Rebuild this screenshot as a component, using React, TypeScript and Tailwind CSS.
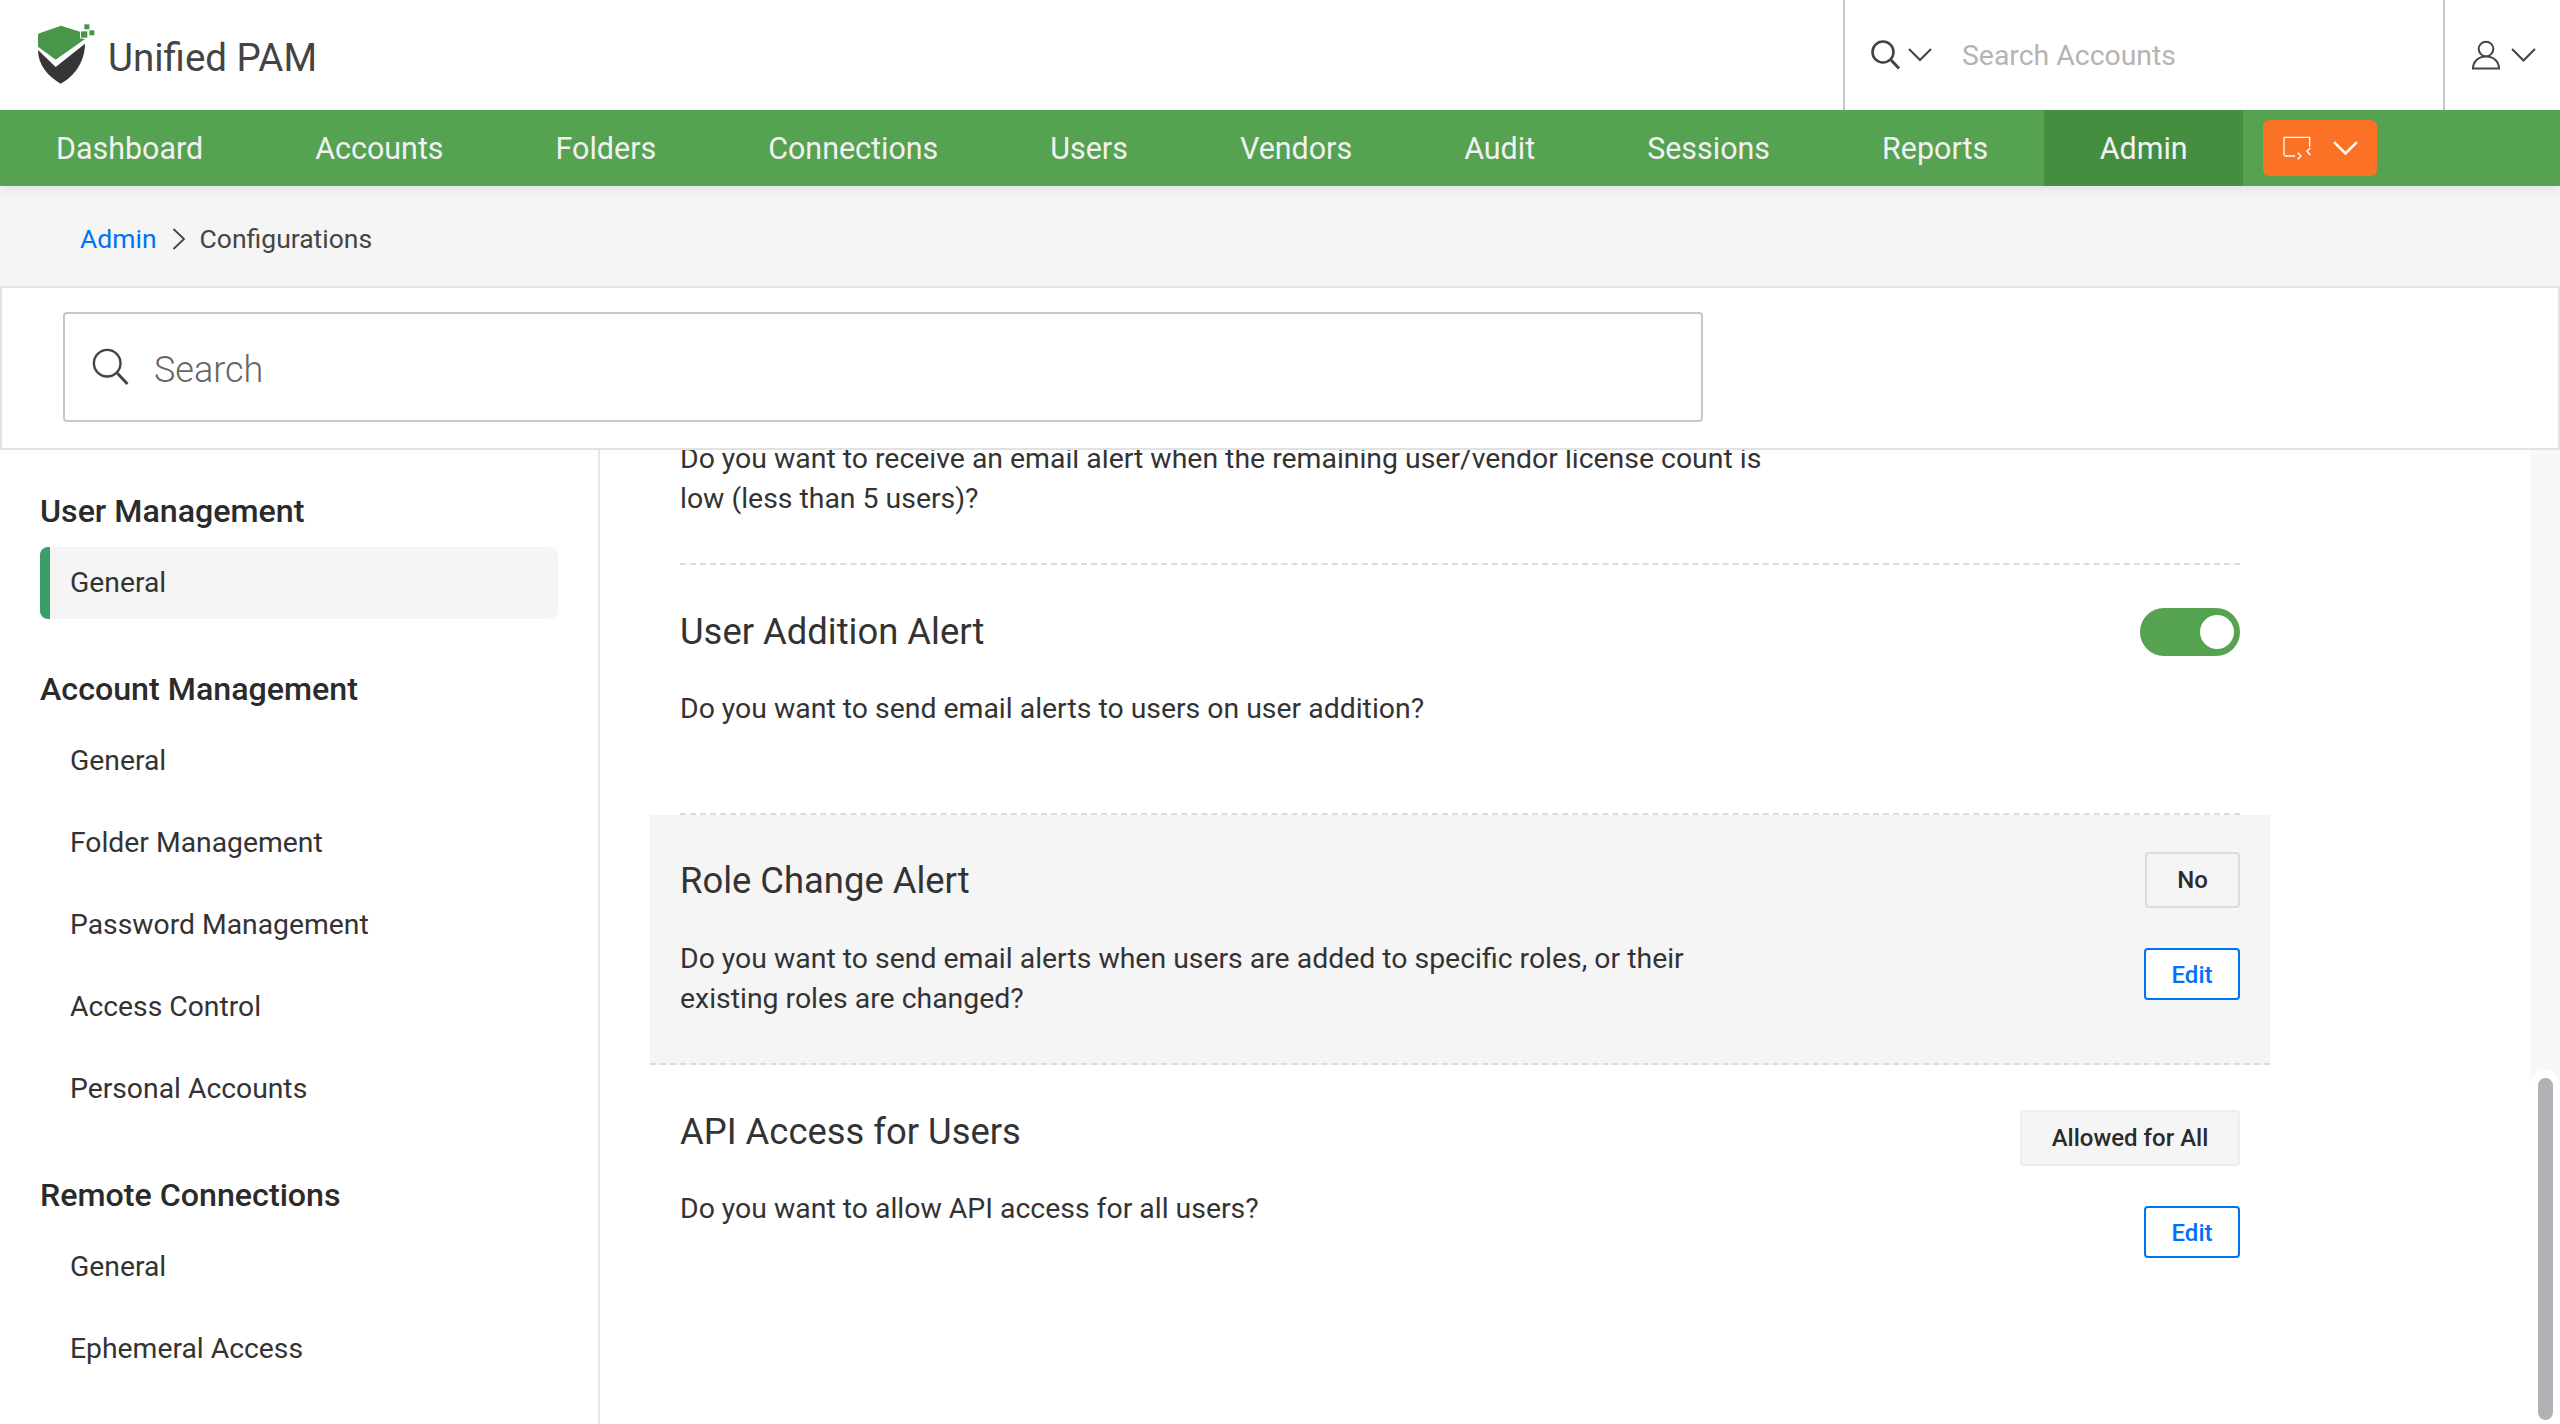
const navItems = ['Dashboard', 'Accounts', 'Folders', 'Connections', 'Users', 'Vendors', 'Audit', 'Sessions', 'Reports'];

const sidebarGroups = [
  { title: 'Account Management', gap: 'mt-[48px]', items: ['General', 'Folder Management', 'Password Management', 'Access Control', 'Personal Accounts'] },
  { title: 'Remote Connections', gap: 'mt-[43px]', items: ['General', 'Ephemeral Access'] },
];

function Logo() {
  return (
    <svg width="80" height="80" viewBox="0 0 240 240" className="shrink-0">
      <path d="M24 60 Q24 56 28 55 L93 32 L150 50 L150 70 L165 72 L77 134 L24 95 Z" fill="#4a9648" />
      <path d="M24 105 L77 156 L165 86 C165 140 132 185 92 206 C55 185 24 150 24 105 Z" fill="#363636" />
      <rect x="163" y="28" width="15" height="15" fill="#4a9648" />
      <rect x="178" y="46" width="15" height="15" fill="#4a9648" />
      <rect x="153" y="49" width="19" height="19" fill="#4a9648" />
    </svg>
  );
}

function Chevron({ width, color, stroke = 2 }: { width: number; color: string; stroke?: number }) {
  return (
    <svg width={width} height={width * 0.55} viewBox="0 0 24 13.2" fill="none" className="shrink-0">
      <path d="M1 1 L12 12 L23 1" stroke={color} strokeWidth={stroke} />
    </svg>
  );
}

function SearchIcon({ size, stroke, color }: { size: number; stroke: number; color: string }) {
  return (
    <svg width={size} height={size} viewBox="0 0 30 30" fill="none" className="shrink-0">
      <circle cx="12" cy="12" r="10.5" stroke={color} strokeWidth={stroke} />
      <path d="M20 20 L28 28.5" stroke={color} strokeWidth={stroke + 0.4} />
    </svg>
  );
}

function UserIcon() {
  return (
    <svg width="30" height="30" viewBox="0 0 30 30" fill="none" className="shrink-0">
      <path d="M2 28.5 C2 22 7 16.5 15 16.5 C23 16.5 28 22 28 28.5 Z" stroke="#444" strokeWidth="2" fill="#fff" />
      <circle cx="15" cy="9" r="7.3" stroke="#444" strokeWidth="2" fill="#fff" />
    </svg>
  );
}

function RemoteIcon() {
  return (
    <svg width="28" height="24" viewBox="0 0 84 72" fill="none" className="shrink-0">
      <path d="M36 60 H8 Q3 60 3 55 V4 H80 V32" stroke="#fff" strokeWidth="4" />
      <path d="M44 50 L54 60 L44 70" stroke="#fff" strokeWidth="4.5" />
      <path d="M82 36 L72 46 L82 57" stroke="#fff" strokeWidth="4.5" />
    </svg>
  );
}

function Header() {
  return (
    <div className="flex h-[110px] items-stretch bg-white">
      <div className="flex flex-1 items-center pl-[30px]">
        <Logo />
        <span className="ml-[-2px] mt-[6px] text-[38.5px] leading-none text-[#444]">Unified PAM</span>
      </div>
      <div className="flex w-[602px] items-center border-x-2 border-[#c8c8c8] pl-[26px]">
        <SearchIcon size={30} stroke={2.6} color="#444" />
        <span className="ml-[7px]"><Chevron width={24} color="#444" /></span>
        <span className="ml-[30px] mt-[2px] text-[28.4px] text-[#b4b4b4]">Search Accounts</span>
      </div>
      <div className="flex w-[115px] items-center pl-[26px]">
        <UserIcon />
        <span className="ml-[10px]"><Chevron width={25} color="#444" /></span>
      </div>
    </div>
  );
}

function NavBar() {
  return (
    <div className="relative flex h-[76px] items-stretch bg-[#55a250] text-[30.44px] text-[#f1f1f1] shadow-[0_4px_10px_rgba(0,0,0,0.08)]">
      {navItems.map((item) => (
        <div key={item} className="flex items-center px-[56px] pt-[2px]">{item}</div>
      ))}
      <div className="flex w-[199px] items-center justify-center bg-[#458e40] pt-[2px]">Admin</div>
      <div className="ml-[20px] mt-[10px] flex h-[56px] w-[114px] items-center rounded-[6px] bg-[#fb7125] pl-[20px]">
        <RemoteIcon />
        <span className="ml-[22px]"><Chevron width={25} color="#fff" stroke={2.4} /></span>
      </div>
    </div>
  );
}

function Breadcrumb() {
  return (
    <div className="flex h-[100px] items-center bg-[#f5f5f5] pl-[80px] pt-[6px] text-[26.5px]">
      <span className="text-[#0073f5]">Admin</span>
      <svg width="14" height="24" viewBox="0 0 14 24" fill="none" className="ml-[15px] mr-[14px]">
        <path d="M1.5 2 L12 12 L1.5 22" stroke="#444" strokeWidth="1.8" />
      </svg>
      <span className="text-[#444]">Configurations</span>
    </div>
  );
}

function SearchBar() {
  return (
    <div className="relative z-10 flex h-[164px] items-start border-2 border-[#e2e2e2] bg-white pl-[61px] pt-[24px]">
      <div className="flex h-[110px] w-[1640px] items-center rounded-[4px] border-2 border-[#c8c8c8] pl-[27px]">
        <SearchIcon size={38} stroke={1.9} color="#444" />
        <input
          placeholder="Search"
          className="ml-[24px] flex-1 bg-transparent pt-[6px] text-[36px] font-light outline-none placeholder:text-[#666]"
        />
      </div>
    </div>
  );
}

function Sidebar() {
  return (
    <div className="h-full w-[600px] shrink-0 border-r-2 border-[#e6e6e6] pl-[40px] pr-[40px] pt-[39px]">
      <div className="text-[32.2px] font-medium leading-[44px] text-[#2b2b2b]">User Management</div>
      <div className="mt-[14px] flex h-[72px] items-center rounded-[8px] border-l-[10px] border-[#3a9e68] bg-[#f5f5f5] pl-[20px] text-[28.3px] text-[#333]">
        General
      </div>
      {sidebarGroups.map((group) => (
        <div key={group.title} className={group.gap}>
          <div className="text-[32.2px] font-medium leading-[44px] text-[#2b2b2b]">{group.title}</div>
          <div className="mt-[9px]">
            {group.items.map((item) => (
              <div key={item} className="flex h-[82px] items-center pl-[30px] text-[28.3px] text-[#333]">{item}</div>
            ))}
          </div>
        </div>
      ))}
    </div>
  );
}

function Title({ children }: { children: string }) {
  return <div className="text-[36.4px] leading-[50px] text-[#333]">{children}</div>;
}

function Desc({ children, className = '' }: { children: React.ReactNode; className?: string }) {
  return <div className={`max-w-[1090px] text-[28.4px] leading-[40px] text-[#333] ${className}`}>{children}</div>;
}

function ValueBadge({ label, className = '' }: { label: string; className?: string }) {
  return (
    <div className={`flex h-[56px] items-center justify-center rounded-[4px] border-2 bg-[#f5f5f5] text-[24px] font-medium text-[#2b2b2b] ${className}`}>
      {label}
    </div>
  );
}

function EditButton() {
  return (
    <div className="flex h-[52px] w-[96px] items-center justify-center rounded-[4px] border-2 border-[#0073f5] bg-white pt-[2px] text-[24px] font-medium text-[#0073f5]">
      Edit
    </div>
  );
}

function Content() {
  return (
    <div className="h-full flex-1 overflow-hidden">
      <div className="ml-[50px] mt-[-11px] w-[1620px]">
        <div className="mx-[30px] border-b-2 border-dashed border-[#dcdcdc] pb-[44px]">
          <Desc>
            Do you want to receive an email alert when the remaining user/vendor license count is low (less than 5 users)?
          </Desc>
        </div>

        <div className="mx-[30px] h-[250px] border-b-2 border-dashed border-[#dcdcdc] pt-[42px]">
          <div className="flex items-center justify-between">
            <Title>User Addition Alert</Title>
            <div className="flex h-[48px] w-[100px] items-center justify-end rounded-full bg-[#55a250] pr-[6px]">
              <div className="h-[34px] w-[34px] rounded-full bg-white" />
            </div>
          </div>
          <Desc className="mt-[32px]">Do you want to send email alerts to users on user addition?</Desc>
        </div>

        <div className="flex h-[250px] justify-between border-b-2 border-dashed border-[#dcdcdc] bg-[#f5f5f5] px-[30px] pt-[37px]">
          <div className="pt-[4px]">
            <Title>Role Change Alert</Title>
            <Desc className="mt-[33px]">
              Do you want to send email alerts when users are added to specific roles, or their existing roles are changed?
            </Desc>
          </div>
          <div className="flex flex-col items-end gap-[40px]">
            <ValueBadge label="No" className="w-[95px] border-[#dcdcdc]" />
            <EditButton />
          </div>
        </div>

        <div className="flex justify-between px-[30px] pt-[45px]">
          <div className="mt-[-3px]">
            <Title>API Access for Users</Title>
            <Desc className="mt-[32px]">Do you want to allow API access for all users?</Desc>
          </div>
          <div className="flex flex-col items-end gap-[40px]">
            <ValueBadge label="Allowed for All" className="w-[220px] border-[#eeeeee]" />
            <EditButton />
          </div>
        </div>
      </div>
    </div>
  );
}

function Scrollbar() {
  return (
    <div className="flex h-full w-[30px] shrink-0 flex-col justify-end bg-[#f9f8f9]">
      <div className="flex h-[354px] justify-center rounded-t-[15px] bg-white pb-[4px] pt-[8px]">
        <div className="w-[15px] rounded-full bg-[#b0b0b5]" />
      </div>
    </div>
  );
}

export default function App() {
  return (
    <div className="flex h-[1424px] w-[2560px] flex-col overflow-hidden bg-white [font-family:Roboto,sans-serif]">
      <Header />
      <NavBar />
      <Breadcrumb />
      <SearchBar />
      <div className="flex min-h-0 flex-1">
        <Sidebar />
        <Content />
        <Scrollbar />
      </div>
    </div>
  );
}
